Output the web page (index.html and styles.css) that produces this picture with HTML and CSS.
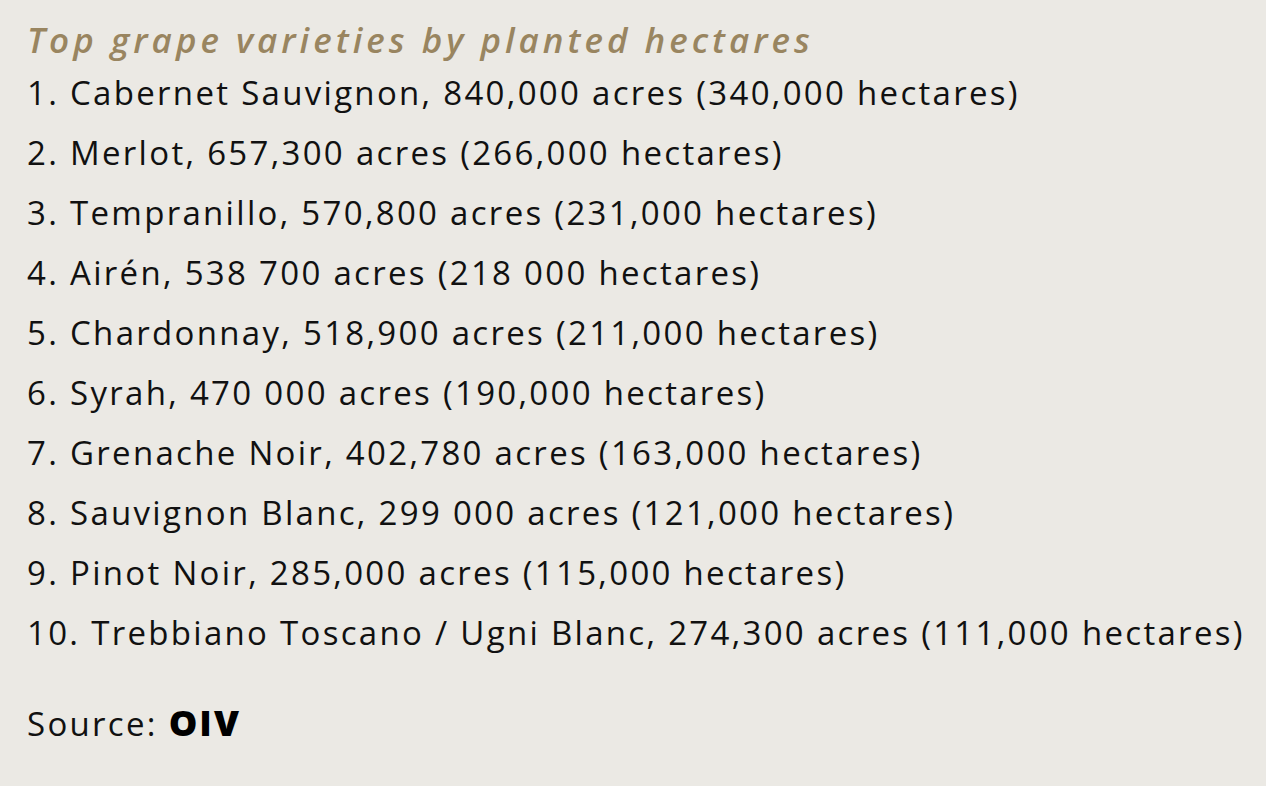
FILE: index.html
```html
<!DOCTYPE html>
<html lang="en">
<head>
<meta charset="utf-8">
<link rel="stylesheet" href="styles.css">
</head>
<body>
<main class="panel">
  <h2 class="title">Top grape varieties by planted hectares</h2>
  <ol class="list">
    <li>1. Cabernet Sauvignon, 840,000 acres (340,000 hectares)</li>
    <li>2. Merlot, 657,300 acres (266,000 hectares)</li>
    <li>3. Tempranillo, 570,800 acres (231,000 hectares)</li>
    <li>4. Airén, 538 700 acres (218 000 hectares)</li>
    <li>5. Chardonnay, 518,900 acres (211,000 hectares)</li>
    <li>6. Syrah, 470 000 acres (190,000 hectares)</li>
    <li>7. Grenache Noir, 402,780 acres (163,000 hectares)</li>
    <li>8. Sauvignon Blanc, 299 000 acres (121,000 hectares)</li>
    <li>9. Pinot Noir, 285,000 acres (115,000 hectares)</li>
    <li>10. Trebbiano Toscano / Ugni Blanc, 274,300 acres (111,000 hectares)</li>
  </ol>
  <p class="source">Source: <strong class="brand">OIV</strong></p>
</main>
</body>
</html>
```
FILE: styles.css
```css
html, body {
  margin: 0;
  padding: 0;
  background: #ebe9e4;
}
.panel {
  padding: 17px 27px 0;
  font-family: "Open Sans", "Liberation Sans", sans-serif;
  color: #111;
}
.title {
  margin: 0;
  font-size: 35px;
  line-height: 46px;
  font-style: italic;
  font-weight: 600;
  letter-spacing: 4px;
  color: #998560;
}
.list {
  list-style: none;
  margin: 0;
  padding: 0;
}
.list li {
  font-size: 33px;
  line-height: 60px;
  letter-spacing: 2.3px;
  white-space: nowrap;
}
.source {
  margin: 30px 0 0;
  font-size: 33px;
  line-height: 60px;
  letter-spacing: 2.3px;
}
.brand {
  font-size: 36px;
  font-weight: 800;
  letter-spacing: 2px;
  color: #000;
}
```
